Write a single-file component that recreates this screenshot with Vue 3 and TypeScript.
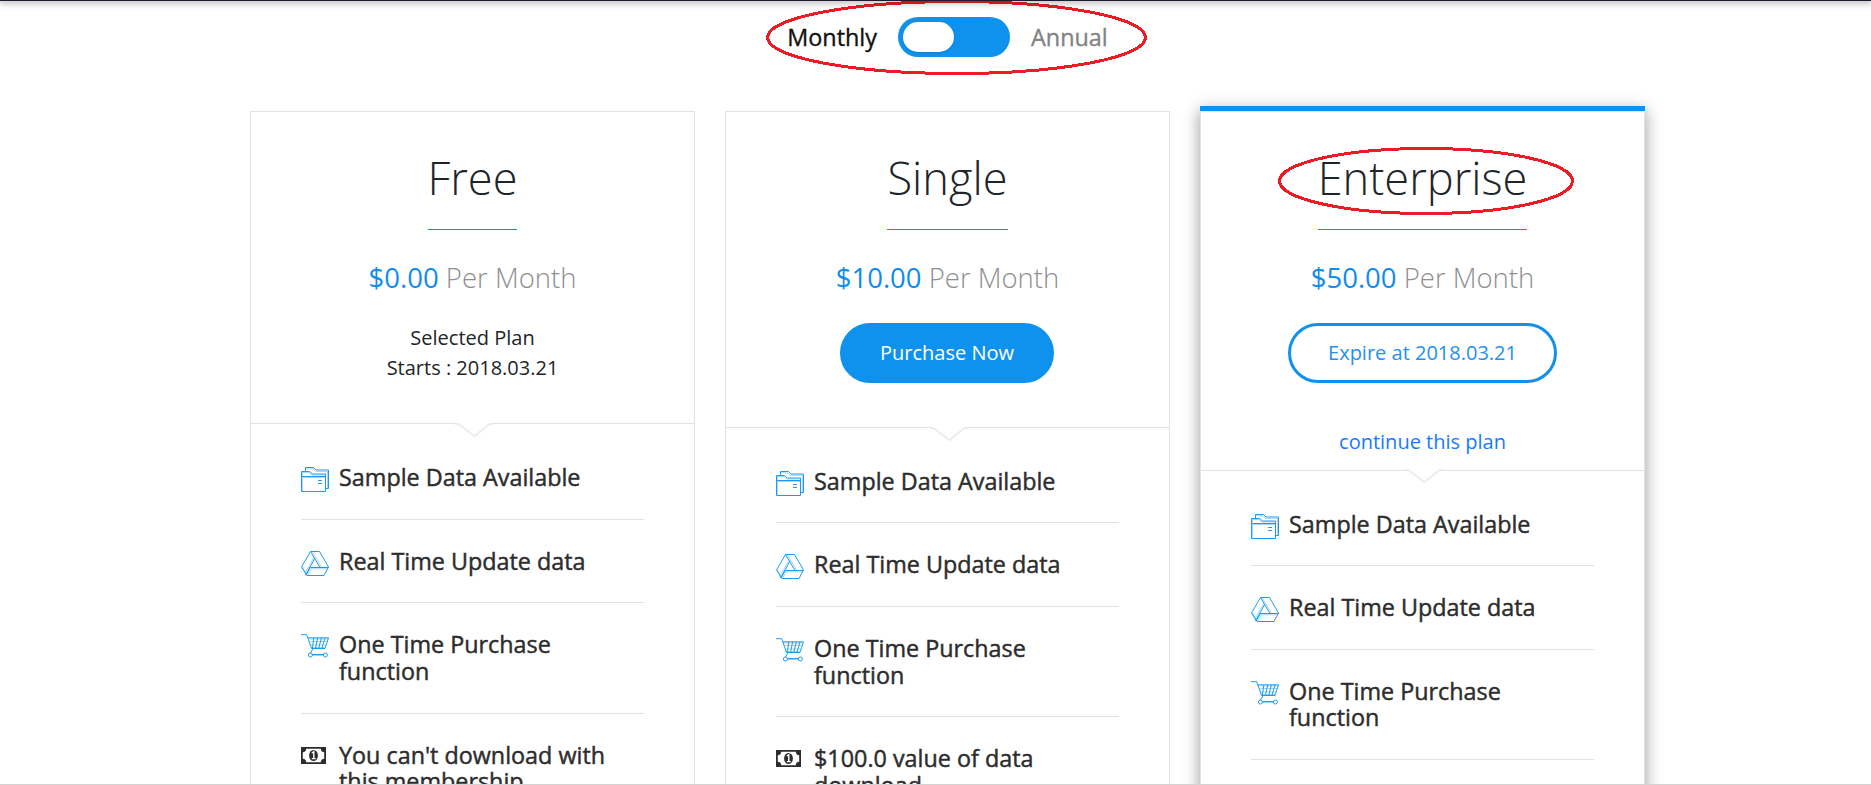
<script setup lang="ts">
import { ref } from 'vue'

type IconName = 'folder' | 'drive' | 'cart' | 'money'

interface Feature {
  icon: IconName
  text: string
}

interface Plan {
  id: string
  name: string
  price: string
  status?: string[]
  action?: string
  expiry?: string
  link?: string
  features: Feature[]
}

const common: Feature[] = [
  { icon: 'folder', text: 'Sample Data Available' },
  { icon: 'drive', text: 'Real Time Update data' },
  { icon: 'cart', text: 'One Time Purchase function' },
]

const plans: Plan[] = [
  {
    id: 'free',
    name: 'Free',
    price: '$0.00',
    status: ['Selected Plan', 'Starts : 2018.03.21'],
    features: [...common, { icon: 'money', text: "You can't download with this membership" }],
  },
  {
    id: 'single',
    name: 'Single',
    price: '$10.00',
    action: 'Purchase Now',
    features: [...common, { icon: 'money', text: '$100.0 value of data download' }],
  },
  {
    id: 'enterprise',
    name: 'Enterprise',
    price: '$50.00',
    expiry: 'Expire at 2018.03.21',
    link: 'continue this plan',
    features: [...common],
  },
]

const annual = ref(false)
</script>

<template>
  <main class="page">
    <div class="billing">
      <span class="period monthly" :class="{ muted: annual }">Monthly</span>
      <button class="switch" :class="{ on: annual }" aria-label="Billing period" @click="annual = !annual">
        <span class="knob"></span>
      </button>
      <span class="period annual" :class="{ muted: !annual }">Annual</span>
    </div>

    <div class="plans">
      <section v-for="plan in plans" :key="plan.id" class="card" :class="plan.id">
        <header class="head">
          <h2 class="name">{{ plan.name }}</h2>
          <p class="price"><b>{{ plan.price }}</b> Per Month</p>
          <div v-if="plan.status" class="status">
            <div v-for="line in plan.status" :key="line">{{ line }}</div>
          </div>
          <button v-if="plan.action" class="btn solid">{{ plan.action }}</button>
          <button v-if="plan.expiry" class="btn outline">{{ plan.expiry }}</button>
          <a v-if="plan.link" class="continue">{{ plan.link }}</a>
          <svg class="notch" viewBox="0 0 38 14">
            <path d="M0 0H38V1.5H34L19.5 12.5L5 1.5H0Z" fill="#fff" />
            <path d="M0 1H3.5L19.5 13.2L34.5 1H38" fill="none" stroke="#ebebeb" stroke-width="1.8" />
          </svg>
        </header>
        <ul class="features">
          <li v-for="item in plan.features" :key="item.text" class="feature">
            <svg v-if="item.icon === 'folder'" class="icon folder" viewBox="0 0 28 25">
              <path class="soft" d="M1.4 5.5H8L11 8H24 M1.4 5V24 M5 1.8H12L14.5 4.4H27 M26.5 4V21 M1 10.5H24" />
              <path d="M.5 24.5V4.5H8.5L11.5 7H24.5V24.5Z M.5 9.5H24.5" />
              <path d="M4.5 4V.5H12.5L15 3H27.5V21.5H25" />
              <path d="M17 13.5H21 M17 16.5H21" />
            </svg>
            <svg v-else-if="item.icon === 'drive'" class="icon" viewBox="0 0 28 25">
              <path class="soft" d="M11 .5L20.4 16 M12.8 6.5L3.6 22.5 M9.5 17.8H27 M10.4 18L6.5 24 M1.6 16L5 22.5" />
              <path d="M9.5 .5H18.5L27.5 16L23 24.5H6L.5 16Z" />
              <path d="M9.5 .5L19 16.5H27.5 M13.7 7.5L4.5 24 M19 16.5H9.2L5 24.3" />
            </svg>
            <svg v-else-if="item.icon === 'cart'" class="icon" viewBox="0 0 28 25">
              <path class="soft" d="M8.3 7.5H26.2 M9.5 11H25 M7 5H27 M10 13.5H24.4 M11 21.5H22" />
              <path d="M12.8 4L11.4 14 M16.6 4L14.6 14 M20.4 4L17.8 14 M24 4L21 14" />
              <path d="M0 .7H5.7L10.5 14.5H24L27.5 3.8H7 M12 14.5L9.3 19.3 M11 20.5H22.5" />
              <circle cx="9.4" cy="21" r="2" />
              <circle cx="24.4" cy="21" r="2" />
            </svg>
            <svg v-else class="icon money" viewBox="0 0 28 25">
              <path fill-rule="evenodd" d="M0 0H25V17H0Z M5.2 1.8C5.2 4 3.8 5.2 1.8 5.2V11.8C3.8 11.8 5.2 13 5.2 15.2H19.8C19.8 13 21.2 11.8 23.2 11.8V5.2C21.2 5.2 19.8 4 19.8 1.8Z" />
              <ellipse cx="12.5" cy="8.5" rx="4.4" ry="5.5" />
              <path class="digit" d="M10.8 6L12.8 4.8V11.5M10.8 11.6H14.7" />
            </svg>
            <span class="label">{{ item.text }}</span>
          </li>
        </ul>
      </section>
    </div>

    <svg class="marks" viewBox="0 0 1871 785">
      <ellipse cx="956.5" cy="37.5" rx="189" ry="36" />
      <ellipse cx="1426" cy="181" rx="146.5" ry="32.5" />
    </svg>
    <div class="top-edge"></div>
  </main>
</template>

<style>
body {
  overflow: hidden;
}
</style>

<style scoped>
.page {
  position: relative;
  box-sizing: border-box;
  width: 1871px;
  height: 785px;
  overflow: hidden;
  padding-top: 17px;
  background: #fff;
  border-bottom: 1px solid #d2d2d2;
  color: #212529;
  font-family: 'Open Sans', 'Noto Sans', sans-serif;
}

.top-edge {
  position: absolute;
  top: 0;
  left: 0;
  width: 100%;
  height: 1px;
  background: #1c1c30;
  box-shadow: 0 0 7px 1px rgba(0, 0, 0, 0.55);
}

.billing {
  display: grid;
  grid-template-columns: 898px 112px 1fr;
  align-items: center;
  height: 40px;
  font-size: 23.4px;
  color: #111;
}

.period {
  -webkit-text-stroke: 0.35px currentColor;
}

.monthly {
  justify-self: end;
  margin-right: 21px;
}

.annual {
  margin-left: 21px;
}

.period.muted {
  color: #838383;
}

.switch {
  display: flex;
  width: 112px;
  height: 40px;
  padding: 5px;
  border: 0;
  border-radius: 20px;
  background: #0f92ee;
}

.switch.on {
  justify-content: flex-end;
}

.knob {
  width: 51px;
  height: 30px;
  border-radius: 15px;
  background: #fff;
  box-shadow: 0 1px 2px rgba(0, 0, 0, 0.15);
}

.plans {
  display: flex;
  gap: 30px;
  align-items: flex-start;
  margin: 54px 0 0 250px;
}

.card {
  position: relative;
  box-sizing: border-box;
  width: 445px;
  height: 760px;
  border: 1px solid #e2e2e2;
  background: #fff;
}

.enterprise {
  box-shadow: 0 -5px 0 #0f92ee, 0 0 15px 1px rgba(0, 0, 0, 0.36);
}

.head {
  position: relative;
  box-sizing: border-box;
  display: flex;
  flex-direction: column;
  align-items: center;
  height: 312px;
  padding-top: 38px;
  border-bottom: 1px solid #e2e2e2;
}

.single .head {
  height: 316px;
}

.enterprise .head {
  height: 359px;
}

.name {
  margin: 0;
  padding-bottom: 23px;
  border-bottom: 1px solid #0f92ee;
  font-size: 45.2px;
  font-weight: 300;
  line-height: 56px;
}

.price {
  margin: 29px 0 0;
  font-size: 27.5px;
  font-weight: 300;
  line-height: 38px;
  color: #8f8f8f;
}

.price b {
  font-weight: 400;
  color: #0f8cee;
}

.status {
  margin-top: 26px;
  font-size: 20px;
  line-height: 30px;
  text-align: center;
}

.btn {
  box-sizing: border-box;
  height: 60px;
  margin-top: 26px;
  padding: 0 0 2px;
  border: 3px solid #0f92ee;
  border-radius: 30px;
  font: 400 20px 'Open Sans', sans-serif;
}

.solid {
  width: 214px;
  margin-right: 1px;
  background: #0f92ee;
  color: #fff;
}

.outline {
  width: 269px;
  background: #fff;
  color: #2590ee;
}

.continue {
  margin-top: 44px;
  font-size: 20px;
  line-height: 30px;
  color: #147bff;
}

.notch {
  position: absolute;
  left: 204px;
  top: 311px;
  width: 38px;
  height: 14px;
}

.single .notch {
  top: 315px;
}

.enterprise .notch {
  top: 357px;
}

.features {
  margin: 0;
  padding: 12.3px 50px 0;
  list-style: none;
}

.single .features {
  padding-top: 11.9px;
}

.enterprise .features {
  padding-top: 11.5px;
}

.feature {
  display: flex;
  padding: 28px 0 27.9px;
  border-bottom: 1px solid #e2e2e2;
  font-size: 23.35px;
  line-height: 26.7px;
  color: #2d2d2d;
  -webkit-text-stroke: 0.45px currentColor;
}

.icon {
  flex: none;
  width: 28px;
  height: 25px;
  margin: 3px 10px -3px 0;
  fill: none;
  stroke: #1e9bf0;
  stroke-width: 1;
}

.soft {
  stroke: #a5d6f9;
}

.money {
  margin-top: 5px;
  fill: #2d2d2d;
  stroke: none;
}

.digit {
  fill: none;
  stroke: #fff;
  stroke-width: 1.4;
}

.label {
  width: 280px;
}

.marks {
  position: absolute;
  inset: 0;
  width: 1871px;
  height: 785px;
  fill: none;
  stroke: #ed1c24;
  stroke-width: 3;
  shape-rendering: crispEdges;
  pointer-events: none;
}
</style>
